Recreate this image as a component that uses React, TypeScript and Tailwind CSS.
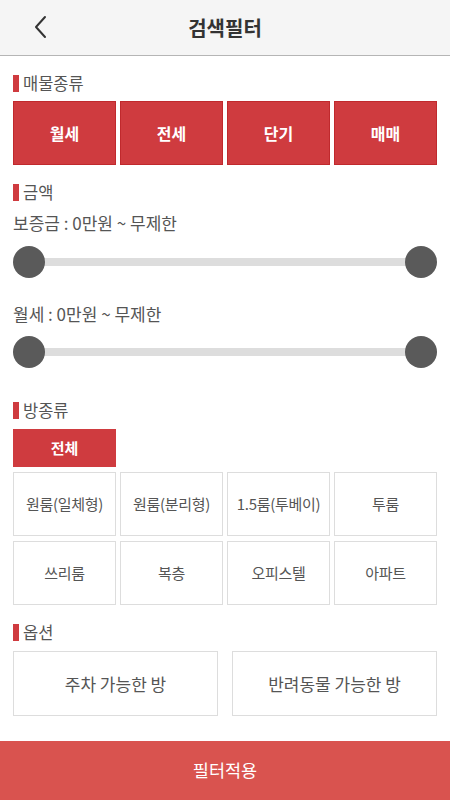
import React, { useState } from "react";

const FONT = "font-['Noto_Sans_CJK_KR','Noto_Sans',sans-serif]";

function SectionLabel({ title, className = "" }: { title: string; className?: string }) {
    return (
        <div className={`flex h-[20px] items-center ${className}`}>
            <span className="mr-[4px] h-[17px] w-[6px] bg-[#cf3b3f]" />
            <span className="text-[16.5px] leading-[20px] text-[#555]">{title}</span>
        </div>
    );
}

function RangeSlider({ className = "" }: { className?: string }) {
    return (
        <div className={`relative h-[32px] ${className}`}>
            <div className="absolute left-[16px] right-[16px] top-[12px] h-[8px] bg-[#dddddd]" />
            <div className="absolute left-0 top-0 h-[32px] w-[32px] rounded-full bg-[#5a5a5a]" />
            <div className="absolute right-0 top-0 h-[32px] w-[32px] rounded-full bg-[#5a5a5a]" />
        </div>
    );
}

export default function App() {
    const [dealTypes] = useState(["월세", "전세", "단기", "매매"]);
    const roomTypes = ["원룸(일체형)", "원룸(분리형)", "1.5룸(투베이)", "투룸", "쓰리룸", "복층", "오피스텔", "아파트"];
    const options = ["주차 가능한 방", "반려동물 가능한 방"];

    return (
        <div className={`flex min-h-[800px] w-[450px] flex-col bg-white ${FONT}`}>
            {/* header */}
            <div className="relative flex h-[56px] items-center justify-center border-b border-[#b5b5b5] bg-[#f5f5f5]">
                <svg className="absolute left-[33px] top-[15px]" width="16" height="24" viewBox="0 0 16 24" fill="none">
                    <path d="M12 2 L3 12 L12 22" stroke="#333" strokeWidth="2" strokeLinecap="round" strokeLinejoin="round" />
                </svg>
                <h1 className="text-[20px] font-bold text-[#333]">검색필터</h1>
            </div>

            <div className="px-[13px]">
                <SectionLabel title="매물종류" className="mt-[17px]" />
                <div className="mt-[8px] grid grid-cols-4 gap-x-[4px]">
                    {dealTypes.map((t) => (
                        <button
                            key={t}
                            className="flex h-[64px] items-center justify-center border border-[#c0292d] bg-[#cf3b3f] text-[16px] font-bold text-white"
                        >
                            {t}
                        </button>
                    ))}
                </div>

                <SectionLabel title="금액" className="mt-[17px]" />
                <p className="mt-[11px] text-[17px] leading-[20px] text-[#555]">보증금 : 0만원 ~ 무제한</p>
                <RangeSlider className="mt-[13px]" />
                <p className="mt-[26px] text-[17px] leading-[20px] text-[#555]">월세 : 0만원 ~ 무제한</p>
                <RangeSlider className="mt-[12px]" />

                <SectionLabel title="방종류" className="mt-[32px]" />
                <div className="mt-[9px] grid grid-cols-4 gap-x-[4px]">
                    <button className="flex h-[38px] items-center justify-center bg-[#cf3b3f] text-[15px] font-bold text-white">
                        전체
                    </button>
                </div>
                <div className="mt-[5px] grid grid-cols-4 gap-x-[4px] gap-y-[5px]">
                    {roomTypes.map((r) => (
                        <button
                            key={r}
                            className="flex h-[64px] items-center justify-center border border-[#dddddd] bg-white text-[15px] tracking-[-0.3px] text-[#555]"
                        >
                            {r}
                        </button>
                    ))}
                </div>

                <SectionLabel title="옵션" className="mt-[17px]" />
                <div className="mt-[9px] grid grid-cols-2 gap-x-[14px]">
                    {options.map((o) => (
                        <button
                            key={o}
                            className="flex h-[65px] items-center justify-center border border-[#dddddd] bg-white text-[17px] text-[#555]"
                        >
                            {o}
                        </button>
                    ))}
                </div>
            </div>

            <button className="mt-[25px] flex h-[59px] w-full items-center justify-center bg-[#d9534f] text-[17.5px] text-white">
                필터적용
            </button>
        </div>
    );
}
